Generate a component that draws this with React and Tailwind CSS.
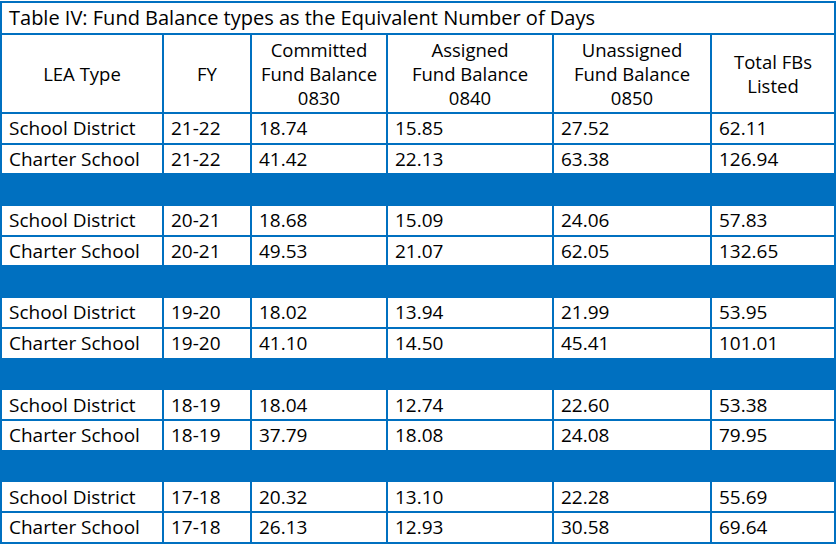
import React from 'react'

const blocks = [
  { fy: '21-22', sd: ['18.74', '15.85', '27.52', '62.11'], cs: ['41.42', '22.13', '63.38', '126.94'] },
  { fy: '20-21', sd: ['18.68', '15.09', '24.06', '57.83'], cs: ['49.53', '21.07', '62.05', '132.65'] },
  { fy: '19-20', sd: ['18.02', '13.94', '21.99', '53.95'], cs: ['41.10', '14.50', '45.41', '101.01'] },
  { fy: '18-19', sd: ['18.04', '12.74', '22.60', '53.38'], cs: ['37.79', '18.08', '24.08', '79.95'] },
  { fy: '17-18', sd: ['20.32', '13.10', '22.28', '55.69'], cs: ['26.13', '12.93', '30.58', '69.64'] },
]

const cell = 'border-2 border-[#0070c0] pl-[7px] pr-1 text-left align-middle text-[19px]'
const head = 'border-2 border-[#0070c0] font-normal text-center align-middle text-[18.5px]'

function DataRow({ type, fy, vals }) {
  return (
    <tr className="h-[30.7px]">
      <td className={cell}>{type}</td>
      <td className={cell}>{fy}</td>
      {vals.map((v, i) => (
        <td key={i} className={cell}>{v}</td>
      ))}
    </tr>
  )
}

export default function App() {
  return (
    <div className="w-[838px] h-[553px] bg-white pt-[1px]" style={{ fontFamily: '"Open Sans", "Noto Sans", sans-serif' }}>
      <table className="table-fixed border-collapse w-[836px] text-black leading-[24px]">
        <colgroup>
          <col className="w-[162px]" />
          <col className="w-[88px]" />
          <col className="w-[136px]" />
          <col className="w-[166px]" />
          <col className="w-[158px]" />
          <col className="w-[124px]" />
        </colgroup>
        <tbody>
          <tr className="h-[32px]">
            <td colSpan={6} className="border-2 border-[#0070c0] pl-[7px] text-left align-middle text-[20px]">
              Table IV: Fund Balance types as the Equivalent Number of Days
            </td>
          </tr>
          <tr className="h-[79px]">
            <th className={head}>LEA Type</th>
            <th className={head}>FY</th>
            <th className={head}>Committed<br />Fund Balance<br />0830</th>
            <th className={head}>Assigned<br />Fund Balance<br />0840</th>
            <th className={head}>Unassigned<br />Fund Balance<br />0850</th>
            <th className={head}>Total FBs<br />Listed</th>
          </tr>
          {blocks.map((b, i) => (
            <React.Fragment key={b.fy}>
              {i > 0 && (
                <tr className="h-[30.7px]">
                  <td colSpan={6} className="border-2 border-[#0070c0] bg-[#0070c0]"></td>
                </tr>
              )}
              <DataRow type="School District" fy={b.fy} vals={b.sd} />
              <DataRow type="Charter School" fy={b.fy} vals={b.cs} />
            </React.Fragment>
          ))}
        </tbody>
      </table>
    </div>
  )
}
